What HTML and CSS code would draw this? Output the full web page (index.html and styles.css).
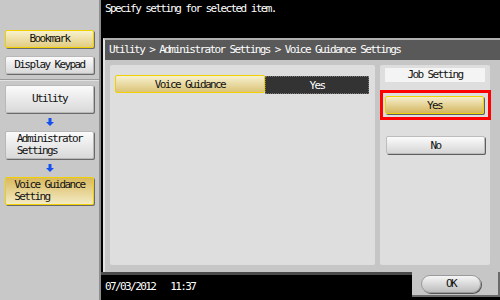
FILE: index.html
```html
<!DOCTYPE html>
<html lang="en">
<head>
  <meta charset="UTF-8">
  <meta name="viewport" content="width=device-width, initial-scale=1.0">
  <title>Voice Guidance Settings</title>
  <link rel="stylesheet" href="styles.css">
</head>
<body>
  <div class="sidebar">
    <div class="side-top">
      <div class="side-btn gold small">Bookmark</div>
      <div class="side-btn small keypad">Display Keypad</div>
    </div>
    <div class="side-path">
      <div class="side-btn tall"><span>Utility</span></div>
      <svg class="arrow" width="8" height="8" viewBox="0 0 8 8"><path d="M2.5 0h3v4h2.5l-4 4l-4 -4h2.5z" fill="#1450f0"/></svg>
      <div class="side-btn tall"><span>Administrator<br>Settings</span></div>
      <svg class="arrow" width="8" height="8" viewBox="0 0 8 8"><path d="M2.5 0h3v4h2.5l-4 4l-4 -4h2.5z" fill="#1450f0"/></svg>
      <div class="side-btn tall gold-dark"><span>Voice Guidance<br>Setting</span></div>
    </div>
  </div>

  <div class="main">
    <div class="message">Specify setting for selected item.</div>
    <div class="dialog">
      <div class="dialog-title">Utility &gt; Administrator Settings &gt; Voice Guidance Settings</div>
      <div class="dialog-body">
        <div class="pane pane-left">
          <div class="setting-row">
            <div class="setting-name">Voice Guidance</div>
            <div class="setting-value">Yes</div>
          </div>
        </div>
        <div class="pane pane-right">
          <div class="job-label">Job Setting</div>
          <div class="highlight">
            <div class="choice gold">Yes</div>
          </div>
          <div class="choice">No</div>
        </div>
      </div>
    </div>
    <div class="footer">
      <div class="footer-info">
        <span>07/03/2012</span>
        <span>11:37</span>
      </div>
      <div class="footer-actions">
        <div class="ok-btn">OK</div>
      </div>
    </div>
  </div>
</body>
</html>
```

FILE: styles.css
```css
body {
  margin: 0;
  width: 500px;
  height: 300px;
  display: flex;
  overflow: hidden;
  background-color: #000;
  font-family: 'DejaVu Sans Mono', 'Liberation Mono', monospace;
  font-size: 11px;
  letter-spacing: -1.6px;
  color: #111;
}
.sidebar {
  width: 99px;
  background-color: #c8c8c8;
  border-right: 2px solid #8e8e8e;
  display: flex;
  flex-direction: column;
}
.side-top {
  padding: 30px 0 0 5px;
  height: 49px;
  border-bottom: 1px solid #9a9a9a;
  box-shadow: 0 1px 0 #e2e2e2;
}
.side-path {
  padding: 5px 0 0 5px;
  display: flex;
  flex-direction: column;
}
.side-btn {
  width: 87px;
  display: flex;
  align-items: center;
  justify-content: center;
  background: linear-gradient(#fbfbfb, #d9d9d9);
  border: 1px solid #b8b8b8;
  border-radius: 2px;
  box-shadow: 1px 1px 0 #6a6a6a;
  line-height: 12px;
}
.side-btn.small {
  height: 16px;
}
.side-btn.keypad {
  margin-top: 8px;
}
.side-btn.tall {
  height: 26px;
}
.side-btn span {
  text-align: left;
}
.side-btn.gold {
  background: linear-gradient(#f7f1cf, #e2cc80);
  border-color: #f0d000;
}
.side-btn.gold-dark {
  background: linear-gradient(#d9b95e, #f3ebc4);
  border-color: #f0d000;
}
.arrow {
  display: block;
  margin: 5px 0 5px 41px;
}
.main {
  flex: 1;
  display: flex;
  flex-direction: column;
}
.message {
  height: 38px;
  color: #fff;
  padding: 2px 0 0 4px;
  box-sizing: border-box;
}
.dialog {
  margin-left: 2px;
  height: 234px;
  background-color: #c6c6c6;
  border-top: 2px solid #b0b0b0;
  border-left: 2px solid #e4e4e4;
  box-sizing: border-box;
  display: flex;
  flex-direction: column;
}
.dialog-title {
  height: 20px;
  line-height: 20px;
  background-color: #595959;
  color: #fff;
  padding-left: 4px;
}
.dialog-body {
  display: flex;
  gap: 5px;
  padding: 5px 10px 0 5px;
}
.pane {
  height: 200px;
  background-color: #dedede;
  border-radius: 2px;
  box-sizing: border-box;
}
.pane-left {
  width: 265px;
  padding: 10px 0 0 5px;
}
.pane-right {
  width: 110px;
  padding: 3px 5px 0 5px;
}
.setting-row {
  display: flex;
  height: 18px;
}
.setting-name {
  width: 148px;
  display: flex;
  align-items: center;
  justify-content: center;
  background: linear-gradient(#f7f1cf, #dcc478);
  border: 1px solid #f0d000;
  border-radius: 2px;
}
.setting-value {
  width: 102px;
  height: 16px;
  margin-top: 1px;
  display: flex;
  align-items: center;
  justify-content: center;
  background-color: #333;
  border: 1px dotted #777;
  color: #fff;
}
.job-label {
  height: 14px;
  line-height: 14px;
  text-align: center;
  background-color: #f4f4f4;
}
.highlight {
  margin: 8px -6px 0 -5px;
  border: 3px solid #ff0000;
  padding: 3px 4px 3px 2px;
}
.choice {
  height: 16px;
  display: flex;
  align-items: center;
  justify-content: center;
  background: linear-gradient(#fbfbfb, #d6d6d6);
  border: 1px solid #bcbcbc;
  border-radius: 2px;
  box-shadow: 1px 1px 0 #5e5e5e;
}
.choice.gold {
  background: linear-gradient(#f6efcc, #d4b660);
  border-color: #f0d000;
}
.pane-right > .choice {
  margin: 16px 0 0 1px;
}
.footer {
  flex: 1;
  display: flex;
}
.footer-info {
  flex: 1;
  border-top: 3px solid #4a4a4a;
  color: #fff;
  display: flex;
  gap: 15px;
  padding: 5px 0 0 4px;
}
.footer-actions {
  width: 77px;
  height: 23px;
  background-color: #c6c6c6;
  border-right: 2px solid #6a6a6a;
  border-bottom: 2px solid #6a6a6a;
  display: flex;
  align-items: center;
  padding-left: 9px;
  box-sizing: content-box;
}
.ok-btn {
  width: 58px;
  height: 16px;
  display: flex;
  align-items: center;
  justify-content: center;
  background: linear-gradient(#f6f6f6, #bdbdbd);
  border: 1px solid #9a9a9a;
  border-radius: 9px;
  box-shadow: 1px 1px 0 #555;
}
```
